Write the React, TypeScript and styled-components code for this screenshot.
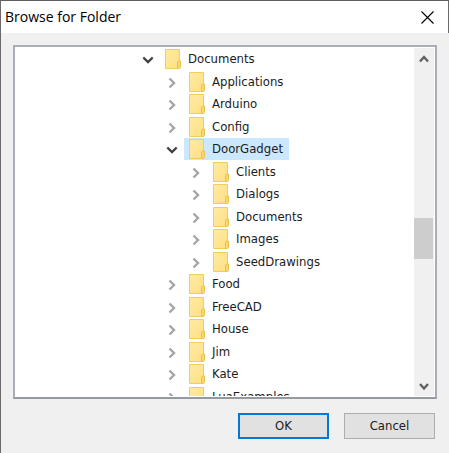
import React, { useState } from "react";
import styled, { createGlobalStyle } from "styled-components";

const GlobalStyle = createGlobalStyle`
  *, *::before, *::after { box-sizing: border-box; }
  body { margin: 0; background: #f0f0f0; }
  button { font: inherit; color: inherit; }
`;

const Dialog = styled.main`
  display: flex;
  flex-direction: column;
  height: 100vh;
  border-top: 1px solid #5e5e5e;
  border-left: 1px solid #6b6869;
  background: #f0f0f0;
  color: #1b1b22;
  font: 13px/22px "DejaVu Sans Condensed", "DejaVu Sans", sans-serif;
  overflow: hidden;
`;

const TitleBar = styled.header`
  display: flex;
  align-items: center;
  justify-content: space-between;
  flex: none;
  height: 32px;
  padding: 0 14px 0 4px;
  border-right: 1px solid #6b6b6b;
  background: #fff;
  color: #000;
`;

const Title = styled.h1`
  margin: 0;
  font: 400 14px/20px "Open Sans", "Noto Sans", sans-serif;
`;

const PlainButton = styled.button`
  display: flex;
  align-items: center;
  justify-content: center;
  flex: none;
  padding: 0;
  border: 0;
  background: none;
`;

const CloseButton = styled(PlainButton)`
  width: 14px;
  height: 14px;
`;

const Pane = styled.section`
  display: flex;
  flex: 1;
  min-height: 0;
  margin: 12px 12px 0;
  padding: 1px;
  border: 2px solid #a9adb5;
  border-bottom-color: #9599a0;
  background: #fff;
`;

const Tree = styled.ul`
  display: grid;
  grid-auto-rows: 22px 23px;
  align-content: start;
  flex: 1;
  min-width: 0;
  margin: 0;
  padding: 0;
  list-style: none;
  overflow: hidden;
`;

const Row = styled.li<{ $level: number }>`
  display: flex;
  align-items: center;
  padding-left: ${(p) => 98 + p.$level * 24}px;
`;

const Expander = styled(PlainButton)<{ $open: boolean }>`
  width: 20px;
  height: 20px;
  margin-right: 2px;
  color: ${(p) => (p.$open ? "#404040" : "#a6a6a6")};
`;

const Item = styled(PlainButton)<{ $selected: boolean }>`
  height: 22px;
  gap: 7px;
  padding: 0 6px 0 5px;
  white-space: nowrap;
  background: ${(p) => (p.$selected ? "#cce8ff" : "transparent")};
`;

const ScrollBar = styled.div`
  display: flex;
  flex-direction: column;
  flex: none;
  width: 20px;
  background: #f0f0f0;
  color: #606060;
`;

const ArrowButton = styled(PlainButton)`
  height: 20px;
`;

const Track = styled.div`
  display: grid;
  grid-template-rows: 150fr 41fr 117fr;
  flex: 1;
`;

const Thumb = styled.div`
  grid-row: 2;
  margin-right: 1px;
  background: #cdcdcd;
`;

const Footer = styled.footer`
  display: flex;
  justify-content: flex-end;
  flex: none;
  gap: 15px;
  padding: 14px 14px;
`;

const PushButton = styled.button<{ $primary?: boolean }>`
  width: 91px;
  height: 26px;
  padding: 0;
  border: ${(p) => (p.$primary ? "2px solid #0078d7" : "1px solid #adadad")};
  background: #e1e1e1;
`;

const Chevron = ({ d }: { d: string }) => (
  <svg width="14" height="14" viewBox="0 0 14 14" fill="none" stroke="currentColor" strokeWidth="2.4" aria-hidden="true">
    <path d={d} />
  </svg>
);

const RIGHT = "M4.5 3.5L9 8L4.5 12.5";
const DOWN = "M2.3 5.5L7 10L11.7 5.5";

const Folder = () => (
  <svg width="16" height="20" viewBox="0 0 16 20" aria-hidden="true">
    <defs>
      <linearGradient id="folderFill" x1="0" y1="0" x2="1" y2="1">
        <stop offset="0" stopColor="#ffeba5" />
        <stop offset="1" stopColor="#ffdf82" />
      </linearGradient>
    </defs>
    <path d="M.5.5H14.5V19.5H.5Z" fill="url(#folderFill)" stroke="#f0cd5c" />
    <path d="M12.5 19.5V13.5L13.5 12H15.5V18.5L14.5 19.5Z" fill="#f5d873" stroke="#e8c24b" />
  </svg>
);

type Node = { name: string; level: number; open?: boolean };

const nodes: Node[] = [
  { name: "Documents", level: 1, open: true },
  { name: "Applications", level: 2 },
  { name: "Arduino", level: 2 },
  { name: "Config", level: 2 },
  { name: "DoorGadget", level: 2, open: true },
  { name: "Clients", level: 3 },
  { name: "Dialogs", level: 3 },
  { name: "Documents", level: 3 },
  { name: "Images", level: 3 },
  { name: "SeedDrawings", level: 3 },
  { name: "Food", level: 2 },
  { name: "FreeCAD", level: 2 },
  { name: "House", level: 2 },
  { name: "Jim", level: 2 },
  { name: "Kate", level: 2 },
  { name: "LuaExamples", level: 2 },
];

export default function App() {
  const [selected, setSelected] = useState(4);
  return (
    <>
      <GlobalStyle />
      <Dialog role="dialog" aria-labelledby="dialog-title">
        <TitleBar>
          <Title id="dialog-title">Browse for Folder</Title>
          <CloseButton type="button" aria-label="Close">
            <svg width="13" height="13" viewBox="0 0 13 13" stroke="#000" strokeWidth="1.1" aria-hidden="true">
              <path d="M.5.5L12.5 12.5M12.5.5L.5 12.5" />
            </svg>
          </CloseButton>
        </TitleBar>
        <Pane>
          <Tree aria-label="Folders">
            {nodes.map((n, i) => (
              <Row key={i} $level={n.level}>
                <Expander type="button" $open={!!n.open} aria-expanded={!!n.open} aria-label={`Toggle ${n.name}`}>
                  <Chevron d={n.open ? DOWN : RIGHT} />
                </Expander>
                <Item type="button" $selected={i === selected} onClick={() => setSelected(i)}>
                  <Folder />
                  {n.name}
                </Item>
              </Row>
            ))}
          </Tree>
          <ScrollBar>
            <ArrowButton type="button" aria-label="Scroll up">
              <Chevron d="M3 10.5L7 6L11 10.5" />
            </ArrowButton>
            <Track>
              <Thumb />
            </Track>
            <ArrowButton type="button" aria-label="Scroll down">
              <Chevron d="M3 5L7 9.5L11 5" />
            </ArrowButton>
          </ScrollBar>
        </Pane>
        <Footer>
          <PushButton type="button" $primary>OK</PushButton>
          <PushButton type="button">Cancel</PushButton>
        </Footer>
      </Dialog>
    </>
  );
}
